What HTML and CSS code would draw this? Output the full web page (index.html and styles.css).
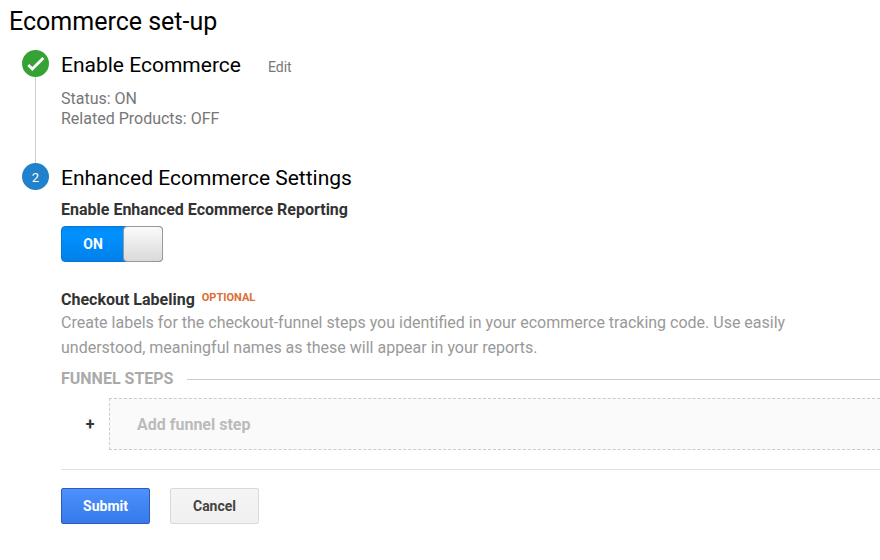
FILE: index.html
```html
<!DOCTYPE html>
<html lang="en">
<head>
    <meta charset="UTF-8">
    <meta name="viewport" content="width=device-width, initial-scale=1.0">
    <title>Ecommerce set-up</title>
    <link rel="stylesheet" href="styles.css">
</head>
<body>
    <main class="setup">
        <h1>Ecommerce set-up</h1>
        <section class="step">
            <div class="step-rail">
                <svg class="step-marker" viewBox="0 0 27 27" aria-label="Done">
                    <circle cx="13.5" cy="13.5" r="13.5" fill="#36a235"/>
                    <path d="M6.3 15l4 4L21.3 8" fill="none" stroke="#fff" stroke-width="2.8"/>
                </svg>
            </div>
            <div class="step-body">
                <div class="step-header">
                    <h2>Enable Ecommerce</h2>
                    <a href="#" class="edit-link">Edit</a>
                </div>
                <p class="summary">Status: ON<br>Related Products: OFF</p>
            </div>
        </section>
        <section class="step">
            <div class="step-rail">
                <span class="step-marker step-number">2</span>
            </div>
            <form class="step-body">
                <h2>Enhanced Ecommerce Settings</h2>
                <label class="field-title" for="reporting">Enable Enhanced Ecommerce Reporting</label>
                <label class="toggle">
                    <input type="checkbox" id="reporting" checked>
                    <span class="toggle-text">ON</span>
                    <span class="toggle-knob"></span>
                </label>
                <h3 class="field-title">Checkout Labeling <span class="optional">OPTIONAL</span></h3>
                <p class="hint">Create labels for the checkout-funnel steps you identified in your ecommerce tracking code. Use easily understood, meaningful names as these will appear in your reports.</p>
                <h4 class="funnel-title">FUNNEL STEPS</h4>
                <div class="funnel-row">
                    <span class="plus" aria-hidden="true">+</span>
                    <button type="button" class="add-step">Add funnel step</button>
                </div>
                <div class="actions">
                    <button type="submit" class="btn btn-primary">Submit</button>
                    <button type="button" class="btn">Cancel</button>
                </div>
            </form>
        </section>
    </main>
</body>
</html>
```
FILE: styles.css
```css
* {
    box-sizing: border-box;
}
body {
    margin: 0;
    background-color: #fff;
    color: #000;
    font-family: Roboto, sans-serif;
    font-size: 16px;
}
h1, h2, h3, h4, p {
    margin: 0;
}
h1 {
    padding: 7px 9px 13px;
    font-size: 25px;
    font-weight: 400;
    line-height: 30px;
}
h2 {
    font-size: 21px;
    font-weight: 400;
    line-height: 30px;
}
button {
    font-family: inherit;
    cursor: pointer;
}
.step {
    display: flex;
    gap: 12px;
    padding-left: 22px;
}
.step-rail {
    display: flex;
    flex-direction: column;
    align-items: center;
    flex: none;
    width: 27px;
}
.step:not(:last-child) .step-rail::after {
    content: "";
    flex: 1;
    width: 1px;
    background-color: #ccc;
}
.step-marker {
    flex: none;
    width: 27px;
    height: 27px;
}
.step-number {
    border-radius: 50%;
    background-color: #2182cb;
    color: #fff;
    font-size: 13px;
    line-height: 29px;
    text-align: center;
}
.step-body {
    flex: 1;
    min-width: 0;
}
.step-header {
    display: flex;
    align-items: baseline;
    gap: 27px;
}
.edit-link {
    color: #777;
    font-size: 14px;
    text-decoration: none;
}
.edit-link:hover {
    text-decoration: underline;
}
.summary {
    padding: 9px 0 34px;
    color: #777;
    font-size: 16px;
    line-height: 20px;
}
.field-title {
    display: block;
    color: #333;
    font-size: 16px;
    font-weight: 700;
    line-height: 20px;
}
h2 + .field-title {
    margin-top: 7px;
}
.toggle {
    position: relative;
    display: flex;
    width: 102px;
    height: 36px;
    margin: 6px 0 28px;
    border: 1px solid #0877d6;
    border-radius: 4px;
    background: linear-gradient(#0088f5, #0092ff 20%, #0080ea);
    color: #fff;
    font-size: 14px;
    font-weight: 700;
    line-height: 35px;
    text-align: center;
    cursor: pointer;
}
.toggle input {
    position: absolute;
    inset: 0;
    margin: 0;
    opacity: 0;
}
.toggle-text {
    flex: 1;
}
.toggle-knob {
    width: 40px;
    margin: -1px;
    border: 1px solid #999;
    border-radius: 4px;
    background: linear-gradient(#fafafa, #dadada);
}
.optional {
    margin-left: 3px;
    color: #dd6c33;
    font-size: 11px;
    font-weight: 700;
    line-height: 1;
    vertical-align: 4px;
}
.hint {
    max-width: 760px;
    color: #999;
    font-size: 16px;
    line-height: 25px;
}
.funnel-title {
    display: flex;
    align-items: center;
    gap: 14px;
    margin-top: 9px;
    color: #aaa;
    font-size: 16px;
    line-height: 20px;
}
.funnel-title::after {
    content: "";
    flex: 1;
    height: 1px;
    background-color: #ccc;
}
.funnel-row {
    display: flex;
    align-items: center;
    gap: 14px;
    margin-top: 9px;
    padding-left: 24px;
}
.plus {
    width: 10px;
    color: #333;
    font-size: 16px;
    font-weight: 700;
    text-align: center;
}
.add-step {
    flex: 1;
    height: 52px;
    padding: 0 27px;
    border: 1px dashed #ccc;
    border-right: 0;
    background-color: #fafafa;
    color: #bbb;
    font-size: 16px;
    font-weight: 700;
    text-align: left;
}
.actions {
    display: flex;
    gap: 20px;
    margin-top: 19px;
    padding-top: 18px;
    border-top: 1px solid #e0e0e0;
}
.btn {
    min-width: 89px;
    height: 36px;
    border: 1px solid #d9d9d9;
    border-radius: 2px;
    background: linear-gradient(#f5f5f5, #f0f0f0);
    color: #444;
    font-size: 14px;
    font-weight: 700;
}
.btn-primary {
    border-color: #2f5bb7;
    background: linear-gradient(#4d90fe, #357ae8);
    box-shadow: 0 1px 1px rgba(0, 0, 0, 0.1);
    color: #fff;
}
```
